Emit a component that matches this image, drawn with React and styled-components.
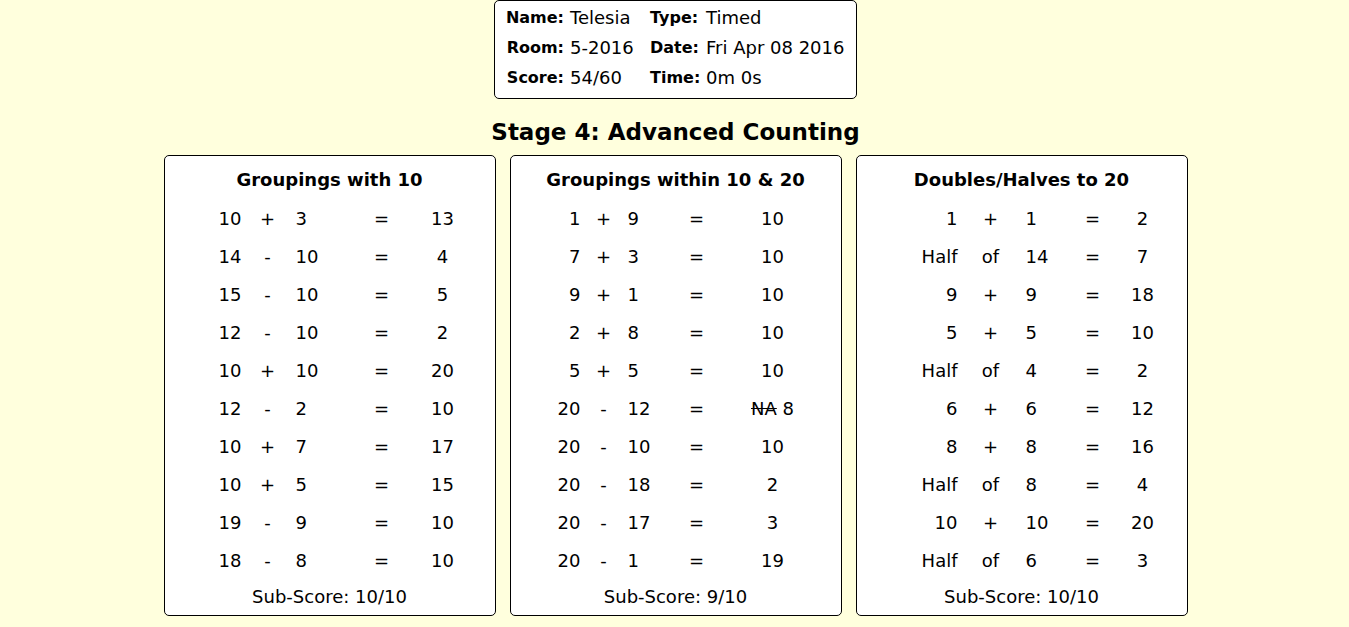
import React from 'react';
import styled, { createGlobalStyle } from 'styled-components';

const GlobalStyle = createGlobalStyle`
  html, body {
    margin: 0;
    padding: 0;
    background: #ffffdd;
    font-family: "Comic Sans MS", "DejaVu Sans", sans-serif;
    color: #000;
  }
`;

const Page = styled.div`
  display: flex;
  flex-direction: column;
  align-items: center;
  padding-left: 2px;
`;

const InfoBox = styled.div`
  display: grid;
  grid-template-columns: 60px 74px 50px 141px;
  column-gap: 6px;
  padding: 2px 9px 5px 9px;
  background: #fff;
  border: 1px solid #000;
  border-radius: 5px;
  font-size: 18px;
  line-height: 30px;
  white-space: nowrap;
`;

const Label = styled.span`
  font-weight: bold;
  font-size: 16px;
  text-align: ${(p) => (p.$left ? 'left' : 'right')};
`;

const Value = styled.span`
  text-align: left;
`;

const StageTitle = styled.h2`
  margin: 16px 0 6px;
  font-size: 23px;
  line-height: 34px;
  font-weight: bold;
`;

const Cards = styled.div`
  display: flex;
  gap: 14px;
`;

const Card = styled.div`
  width: 330px;
  padding-top: 9px;
  background: #fff;
  border: 1px solid #000;
  border-radius: 5px;
  display: flex;
  flex-direction: column;
`;

const CardTitle = styled.h3`
  margin: 0 0 4px;
  text-align: center;
  font-size: 18px;
  line-height: 30px;
  font-weight: bold;
`;

const Row = styled.div`
  display: grid;
  grid-template-columns: ${(p) => p.$cols.map((c) => `${c}px`).join(' ')};
  height: 38px;
  align-items: center;
  font-size: 18px;
  white-space: nowrap;
`;

const Cell = styled.span`
  text-align: ${(p) => p.$align};
  padding-left: ${(p) => p.$pad || 0}px;
`;

const Struck = styled.span`
  text-decoration: line-through;
`;

const SubScore = styled.div`
  height: 36px;
  line-height: 36px;
  text-align: center;
  font-size: 18px;
`;

const cards = [
  {
    title: 'Groupings with 10',
    cols: [77, 52, 60, 56, 66],
    pad: 2,
    score: '10/10',
    rows: [
      ['10', '+', '3', '13'],
      ['14', '-', '10', '4'],
      ['15', '-', '10', '5'],
      ['12', '-', '10', '2'],
      ['10', '+', '10', '20'],
      ['12', '-', '2', '10'],
      ['10', '+', '7', '17'],
      ['10', '+', '5', '15'],
      ['19', '-', '9', '10'],
      ['18', '-', '8', '10'],
    ],
  },
  {
    title: 'Groupings within 10 & 20',
    cols: [70, 46, 40, 60, 92],
    pad: 1,
    score: '9/10',
    rows: [
      ['1', '+', '9', '10'],
      ['7', '+', '3', '10'],
      ['9', '+', '1', '10'],
      ['2', '+', '8', '10'],
      ['5', '+', '5', '10'],
      ['20', '-', '12', 'NA|8'],
      ['20', '-', '10', '10'],
      ['20', '-', '18', '2'],
      ['20', '-', '17', '3'],
      ['20', '-', '1', '19'],
    ],
  },
  {
    title: 'Doubles/Halves to 20',
    cols: [101, 66, 40, 58, 42],
    pad: 2,
    score: '10/10',
    rows: [
      ['1', '+', '1', '2'],
      ['Half', 'of', '14', '7'],
      ['9', '+', '9', '18'],
      ['5', '+', '5', '10'],
      ['Half', 'of', '4', '2'],
      ['6', '+', '6', '12'],
      ['8', '+', '8', '16'],
      ['Half', 'of', '8', '4'],
      ['10', '+', '10', '20'],
      ['Half', 'of', '6', '3'],
    ],
  },
];

const Answer = ({ value }) => {
  if (value.includes('|')) {
    const [wrong, right] = value.split('|');
    return (
      <>
        <Struck>{wrong}</Struck> {right}
      </>
    );
  }
  return value;
};

const App = () => {
  return (
    <Page>
      <GlobalStyle />
      <InfoBox>
        <Label>Name:</Label>
        <Value>Telesia</Value>
        <Label $left>Type:</Label>
        <Value>Timed</Value>
        <Label>Room:</Label>
        <Value>5-2016</Value>
        <Label $left>Date:</Label>
        <Value>Fri Apr 08 2016</Value>
        <Label>Score:</Label>
        <Value>54/60</Value>
        <Label $left>Time:</Label>
        <Value>0m 0s</Value>
      </InfoBox>
      <StageTitle>Stage 4: Advanced Counting</StageTitle>
      <Cards>
        {cards.map((card) => (
          <Card key={card.title}>
            <CardTitle>{card.title}</CardTitle>
            {card.rows.map((r, i) => (
              <Row key={i} $cols={card.cols}>
                <Cell $align="right">{r[0]}</Cell>
                <Cell $align="center">{r[1]}</Cell>
                <Cell $align="left" $pad={card.pad}>{r[2]}</Cell>
                <Cell $align="center">=</Cell>
                <Cell $align="center"><Answer value={r[3]} /></Cell>
              </Row>
            ))}
            <SubScore>Sub-Score: {card.score}</SubScore>
          </Card>
        ))}
      </Cards>
    </Page>
  );
};

export default App;
